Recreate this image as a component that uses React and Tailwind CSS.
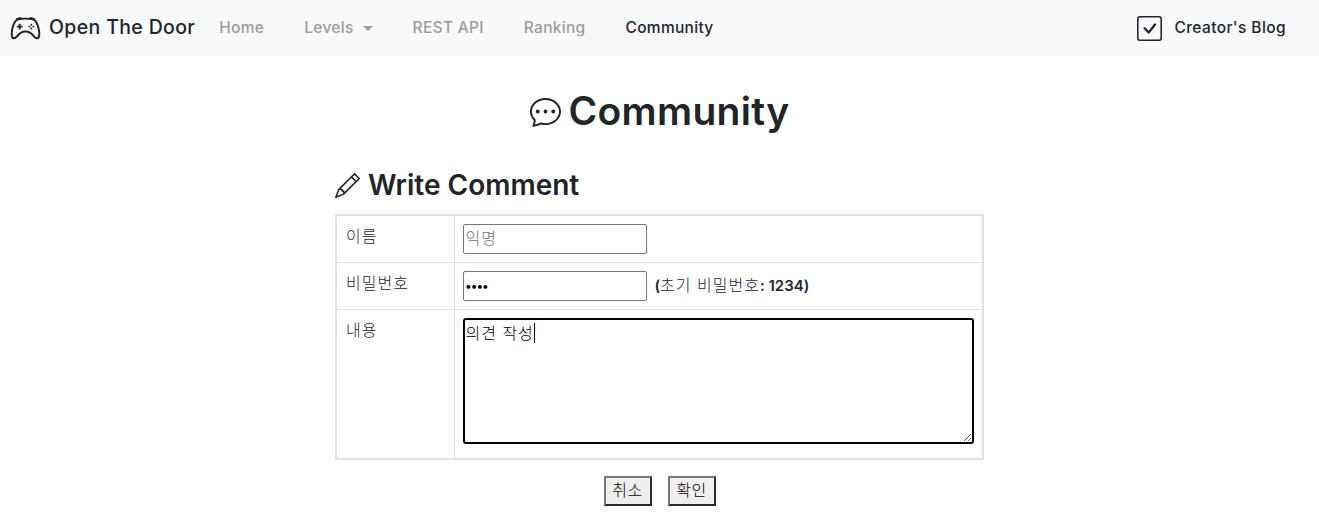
import { BsController, BsCheckSquare, BsChatDots, BsPencil } from "react-icons/bs";

const latin = "font-['Inter','Noto_Sans_CJK_KR',sans-serif]";
const kr = "font-['Liberation_Sans','Noto_Sans_CJK_KR',sans-serif] font-light";

function NavLink({ children, active, className = "" }) {
  return (
    <a className={`text-[15.5px] tracking-[0.3px] font-medium ${active ? "text-[#212529]" : "text-[#9b9c9e]"} ${className}`}>
      {children}
    </a>
  );
}

function Navbar() {
  return (
    <nav className="h-[56px] bg-[#f8f9fa] flex items-center pl-[10px] pr-[33px]">
      <BsController size={31} className="text-[#212529]" />
      <span className="ml-[8px] text-[19.5px] font-medium tracking-[0.35px] text-[#212529]">Open The Door</span>
      <div className="ml-[24px] flex items-center">
        <NavLink>Home</NavLink>
        <NavLink className="ml-[40px] flex items-center">
          Levels
          <span className="ml-[9px] w-0 h-0 border-x-[5px] border-x-transparent border-t-[5px] border-t-[#9b9c9e]" />
        </NavLink>
        <NavLink className="ml-[40px]">REST API</NavLink>
        <NavLink className="ml-[40px]">Ranking</NavLink>
        <NavLink active className="ml-[40px]">Community</NavLink>
      </div>
      <a className="ml-auto flex items-center text-[15.5px] font-medium tracking-[0.4px] text-[#212529]">
        <BsCheckSquare size={25} className="mr-[12px]" />
        Creator's Blog
      </a>
    </nav>
  );
}

function Row({ label, height, children, last }) {
  return (
    <tr className={last ? "" : "border-b border-[#dee2e6]"} style={{ height }}>
      <td className={`w-[118px] align-top pt-[9px] pl-[9px] border-r border-[#dee2e6] text-[16px] tracking-[1px] text-[#212529] ${kr}`}>
        {label}
      </td>
      <td className="align-top pt-[8px] pl-[8px] pr-[8px]">{children}</td>
    </tr>
  );
}

export default function App() {
  return (
    <div className={`min-h-[524px] bg-white overflow-hidden ${latin}`}>
      <Navbar />
      <h1 className="mt-[28px] flex items-center justify-center text-[39px] leading-[54px] font-semibold tracking-[0.3px] text-[#212529]">
        <BsChatDots size={31} className="mr-[8px]" />
        Community
      </h1>
      <div className="w-[649px] ml-[335px] mt-[29px]">
        <h2 className="flex items-center text-[28px] leading-[36px] font-semibold text-[#212529]">
          <BsPencil size={25} className="mr-[8px]" />
          Write Comment
        </h2>
        <table className="mt-[11px] w-full border-2 border-[#dee2e6] border-collapse">
          <tbody>
            <Row label="이름" height={47}>
              <input
                placeholder="익명"
                className={`block w-[184px] h-[30px] px-[2px] border border-[#767676] rounded-[2px] text-[16px] tracking-[1px] placeholder:text-[#757575] ${kr}`}
              />
            </Row>
            <Row label="비밀번호" height={47}>
              <div className="flex items-center">
                <input
                  type="password"
                  defaultValue="1234"
                  className="block w-[184px] h-[30px] px-[2px] border border-[#767676] rounded-[2px] text-[12px] font-bold text-black"
                />
                <span className={`ml-[8px] pt-[1px] text-[15px] font-semibold text-[#212529] ${latin}`}>
                  (<span className={`text-[16px] tracking-[1px] ${kr}`}>초기 비밀번호</span>: 1234)
                </span>
              </div>
            </Row>
            <Row label="내용" last>
              <div className="h-[140px] relative">
                <textarea
                  defaultValue="의견 작성"
                  className={`block w-[511px] h-[126px] px-[1px] pt-[5px] border-2 border-black rounded-[3px] outline-none caret-transparent text-[16px] tracking-[1px] leading-[18px] text-black resize-y ${kr}`}
                />
                <span className="absolute left-[71px] top-[5px] w-px h-[20px] bg-black" />
              </div>
            </Row>
          </tbody>
        </table>
        <div className="mt-[16px] flex justify-center gap-[16px]">
          <button className={`w-[48px] h-[30px] bg-[#efefef] border-2 border-[#767676] border-r-[#2b2b2b] border-b-[#2b2b2b] text-[16px] tracking-[0.5px] text-black ${kr}`}>취소</button>
          <button className={`w-[48px] h-[30px] bg-[#efefef] border-2 border-[#767676] border-r-[#2b2b2b] border-b-[#2b2b2b] text-[16px] tracking-[0.5px] text-black ${kr}`}>확인</button>
        </div>
      </div>
    </div>
  );
}
